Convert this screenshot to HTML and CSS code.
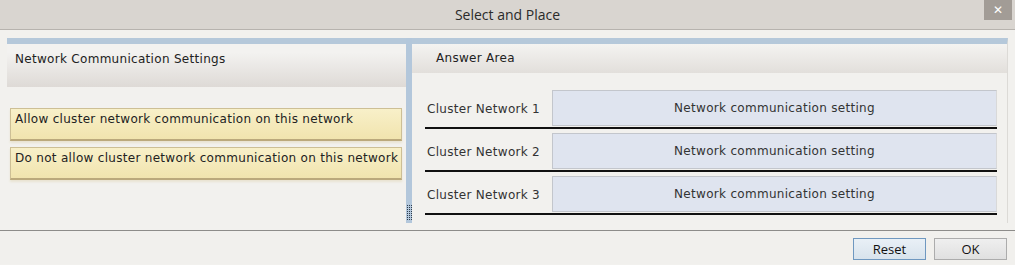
FILE: index.html
```html
<!DOCTYPE html>
<html lang="en">
<head>
    <meta charset="UTF-8">
    <title>Select and Place</title>
    <link rel="stylesheet" href="styles.css">
</head>
<body>

    <div class="titlebar">
        <span></span>
        <span class="title">Select and Place</span>
        <span class="close">&#x2715;</span>
    </div>

    <div class="main">
        <div class="panel left-panel">
            <div class="panel-head tall">Network Communication Settings</div>
            <div class="choices">
                <div class="choice">Allow cluster network communication on this network</div>
                <div class="choice">Do not allow cluster network communication on this network</div>
            </div>
        </div>

        <div class="divider">
            <div class="grip"></div>
        </div>

        <div class="panel right-panel">
            <div class="panel-head">Answer Area</div>
            <div class="rows">
                <div class="row">
                    <span class="row-label">Cluster Network 1</span>
                    <div class="target">Network communication setting</div>
                </div>
                <div class="row">
                    <span class="row-label">Cluster Network 2</span>
                    <div class="target">Network communication setting</div>
                </div>
                <div class="row">
                    <span class="row-label">Cluster Network 3</span>
                    <div class="target">Network communication setting</div>
                </div>
            </div>
        </div>
    </div>

    <div class="footer">
        <button class="btn btn-focus">Reset</button>
        <button class="btn">OK</button>
    </div>

</body>
</html>
```

FILE: styles.css
```css
body {
    margin: 0;
    width: 1015px;
    height: 265px;
    overflow: hidden;
    background: #f2f1ee;
    font-family: 'DejaVu Sans', Verdana, sans-serif;
    font-size: 12px;
    letter-spacing: 0.3px;
    color: #2e2e2e;
}

/* barre de titre */
.titlebar {
    height: 30px;
    display: grid;
    grid-template-columns: 1fr auto 1fr;
    align-items: start;
    background: #d9d5d0;
    border-bottom: 1px solid #b7b3ae;
    box-sizing: border-box;
    letter-spacing: 0;
}

.title {
    font-family: 'Open Sans', sans-serif;
    font-size: 14px;
    line-height: 30px;
    color: #2a2a2a;
}

.close {
    justify-self: end;
    width: 28px;
    height: 20px;
    margin-right: 3px;
    background: #a29c96;
    color: #fff;
    font-size: 12px;
    font-weight: bold;
    line-height: 20px;
    text-align: center;
}

/* zone principale */
.main {
    display: flex;
    height: 200px;
    padding: 8px 7px 0 7px;
    box-sizing: border-box;
}

.panel {
    border-top: 6px solid #b5c8da;
    display: flex;
    flex-direction: column;
}

.left-panel {
    width: 399px;
}

.right-panel {
    flex: 1;
    border-right: 1px solid #dcdad6;
    margin-bottom: 7px;
}

.panel-head {
    height: 29px;
    padding-left: 24px;
    line-height: 29px;
    background: linear-gradient(#f4f3f1, #e2dfdb);
    color: #222;
}

.panel-head.tall {
    height: 43px;
    padding-left: 8px;
    line-height: 30px;
    background: linear-gradient(#f3f2f0 20%, #dedad6);
}

.choices {
    display: flex;
    flex-direction: column;
    gap: 6px;
    padding: 21px 4px 0 3px;
}

.choice {
    height: 33px;
    padding: 3px 0 0 4px;
    box-sizing: border-box;
    background: linear-gradient(#f8f0c9, #f1e4ae);
    border: 1px solid #cdbf95;
    border-bottom: 2px solid #bba97c;
    box-shadow: 0 2px 2px #e9e4d2;
    color: #222;
    white-space: nowrap;
}

.divider {
    width: 6px;
    background: #b3c7db;
    display: flex;
    flex-direction: column;
    justify-content: flex-end;
    align-items: center;
    padding-bottom: 3px;
    margin-bottom: 7px;
    box-sizing: border-box;
}

.grip {
    width: 5px;
    height: 15px;
    background:
        linear-gradient(90deg, #2f3d4c 50%, transparent 50%) 0 0 / 2px 2px,
        #b3c7db;
    -webkit-mask: linear-gradient(#000 50%, transparent 50%) 0 0 / 2px 2px;
    mask: linear-gradient(#000 50%, transparent 50%) 0 0 / 2px 2px;
}

.rows {
    display: flex;
    flex-direction: column;
    gap: 4px;
    padding: 17px 10px 0 13px;
}

.row {
    display: flex;
    align-items: center;
    border-bottom: 2px solid #111;
}

.row-label {
    width: 125px;
    padding-left: 2px;
    color: #333;
    white-space: nowrap;
}

.target {
    flex: 1;
    height: 36px;
    line-height: 34px;
    box-sizing: border-box;
    text-align: center;
    background: #dfe4ef;
    border: 1px solid #c3c6cc;
    border-right-color: #d9d9d9;
    margin-bottom: 1px;
    color: #333;
}

/* boutons du bas */
.footer {
    height: 34px;
    border-top: 1px solid #8d8c8a;
    display: flex;
    justify-content: flex-end;
    align-items: flex-start;
    gap: 8px;
    padding: 7px 8px 0 0;
    box-sizing: border-box;
    background: #f1f0ed;
}

.btn {
    width: 73px;
    height: 22px;
    padding: 0;
    font-family: 'Open Sans', sans-serif;
    font-size: 13px;
    color: #111;
    background: linear-gradient(#efefef, #e0e0e0);
    border: 1px solid #acacac;
}

.btn-focus {
    background: linear-gradient(#e9f0f6, #d8e3ec);
    border-color: #6f98c0;
}
```
